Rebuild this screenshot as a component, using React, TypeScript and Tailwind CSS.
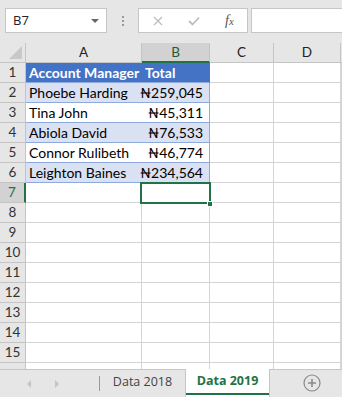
import React from 'react';

const ROWS: { name: string; total: string; band: boolean }[] = [
    { name: 'Phoebe Harding', total: '₦259,045', band: true },
    { name: 'Tina John', total: '₦45,311', band: false },
    { name: 'Abiola David', total: '₦76,533', band: true },
    { name: 'Connor Rulibeth', total: '₦46,774', band: false },
    { name: 'Leighton Baines', total: '₦234,564', band: true },
];

const cols = 'grid grid-cols-[26px_116px_68px_64px_67px_1fr]';
const cell = 'h-5 border-r border-b border-[#d4d4d4]';
const cellFont = { fontFamily: 'Lato, "Liberation Sans", sans-serif' };

const RowHead: React.FC<{ n: number; active?: boolean; hideLabel?: boolean }> = ({ n, active, hideLabel }) => (
    <div
        className={`h-5 flex items-center justify-center text-[13.5px] border-b border-[#c4c4c4] ${
            active ? 'bg-[#d2d2d2] text-[#217346] border-r-2 border-r-[#217346]' : 'bg-[#e6e6e6] text-[#333] border-r border-r-[#c4c4c4]'
        }`}
        style={cellFont}
    >
        {hideLabel ? '' : n}
    </div>
);

const Empties: React.FC = () => (
    <>
        <div className={cell} />
        <div className={cell} />
        <div className={cell} />
    </>
);

const FormulaBar: React.FC = () => (
    <div className="h-[43px] bg-[#e6e6e6] flex items-start pt-2 pl-[5px] gap-0" style={{ fontFamily: '"Open Sans", "Noto Sans", sans-serif' }}>
        <div className="w-[102px] h-[25px] bg-white border border-[#c6c6c6] flex items-center justify-between pl-[7px] pr-[7px] text-[13px] text-[#222]">
            <span>B7</span>
            <span className="w-0 h-0 border-l-[4px] border-r-[4px] border-t-[4px] border-l-transparent border-r-transparent border-t-[#666]" />
        </div>
        <div className="w-[31px] h-[25px] flex flex-col items-center justify-center gap-[2px]">
            <span className="w-[2px] h-[2px] bg-[#9a9a9a]" />
            <span className="w-[2px] h-[2px] bg-[#9a9a9a]" />
            <span className="w-[2px] h-[2px] bg-[#9a9a9a]" />
        </div>
        <div className="w-[110px] h-[25px] bg-white border border-[#c6c6c6] flex items-center">
            <svg className="ml-[14px]" width="10" height="10" viewBox="0 0 10 10">
                <path d="M1 1 L9 9 M9 1 L1 9" stroke="#bdbdbd" strokeWidth="1.3" />
            </svg>
            <svg className="ml-[25px]" width="12" height="10" viewBox="0 0 12 10">
                <path d="M1 5 L4.5 8.5 L11 1.5" stroke="#bdbdbd" strokeWidth="1.8" fill="none" />
            </svg>
            <span className="ml-[25px] text-[14px] italic text-[#555]" style={{ fontFamily: '"Liberation Serif", serif' }}>
                f<span className="text-[11px]">x</span>
            </span>
        </div>
        <div className="ml-[3px] flex-1 h-[25px] bg-white border border-[#c6c6c6] border-r-0" />
    </div>
);

const Grid: React.FC = () => (
    <div className="relative h-[326px] overflow-hidden bg-white">
        <div className={cols}>
            <div className="h-5 bg-[#e6e6e6] border-r border-b border-[#c4c4c4] relative">
                <span className="absolute right-[3px] bottom-[3px] w-0 h-0" style={{ borderBottom: '13px solid #c8c8c8', borderLeft: '13px solid transparent' }} />
            </div>
            {['A', 'B', 'C', 'D'].map(c => (
                <div
                    key={c}
                    className={`h-5 flex items-center justify-center text-[13.5px] border-r border-[#c4c4c4] ${
                        c === 'B' ? 'bg-[#d2d2d2] text-[#1e5c3a] border-b-2 border-b-[#217346]' : 'bg-[#e6e6e6] text-[#222] border-b border-b-[#c4c4c4]'
                    }`}
                    style={cellFont}
                >
                    {c}
                </div>
            ))}
            <div className="h-5 bg-[#e6e6e6] border-b border-[#c4c4c4]" />

            <RowHead n={1} />
            <div className="h-5 bg-[#4472c4] border-b border-[#8ea9db] text-white font-bold text-[14px] pl-[3px] flex items-center" style={cellFont}>Account Manager</div>
            <div className="h-5 bg-[#4472c4] border-b border-[#8ea9db] border-r border-r-[#4472c4] text-white font-bold text-[14px] pl-[3px] flex items-center" style={cellFont}>Total</div>
            <Empties />

            {ROWS.map((r, i) => (
                <React.Fragment key={r.name}>
                    <RowHead n={i + 2} />
                    <div className={`h-5 border-b border-[#8ea9db] text-[14px] text-black pl-[3px] flex items-center ${r.band ? 'bg-[#d9e1f2]' : 'bg-white'}`} style={cellFont}>{r.name}</div>
                    <div className={`h-5 border-b border-r border-[#8ea9db] text-[14px] text-black pr-[6px] flex items-center justify-end ${r.band ? 'bg-[#d9e1f2]' : 'bg-white'}`} style={cellFont}>{r.total}</div>
                    <Empties />
                </React.Fragment>
            ))}

            {Array.from({ length: 10 }, (_, i) => i + 7).map(n => (
                <React.Fragment key={n}>
                    <RowHead n={n} active={n === 7} hideLabel={n === 16} />
                    <div className={cell} />
                    <div className={cell} />
                    <Empties />
                </React.Fragment>
            ))}
        </div>
        {/* selection of B7 */}
        <div className="absolute left-[140px] top-[139px] w-[71px] h-[22px] border-2 border-[#217346]" />
        <div className="absolute left-[207px] top-[158px] w-[6px] h-[6px] bg-[#217346] border border-white" />
    </div>
);

const TabBar: React.FC = () => (
    <div className="h-[28px] bg-[#e6e6e6] border-t border-[#c6c6c6] flex items-stretch text-[12.5px]" style={{ fontFamily: '"Open Sans", "Noto Sans", sans-serif' }}>
        <div className="w-[100px] flex items-center border-r border-[#9a9a9a] my-[6px]">
            <span className="ml-[27px] w-0 h-0 border-t-[4px] border-b-[4px] border-r-[4px] border-t-transparent border-b-transparent border-r-[#c4c4c4]" />
            <span className="ml-[24px] w-0 h-0 border-t-[4px] border-b-[4px] border-l-[4px] border-t-transparent border-b-transparent border-l-[#c4c4c4]" />
        </div>
        <div className="w-[85px] flex items-center justify-center text-[#444] -mt-[2px]">Data 2018</div>
        <div className="w-[85px] bg-white border-x border-[#c6c6c6] -mt-px flex flex-col">
            <div className="flex-1 flex items-center justify-center font-bold text-[#217346]">Data 2019</div>
            <div className="h-[2px] mb-[2px] bg-[#217346]" />
        </div>
        <div className="flex-1 flex items-center justify-center pl-[11px] -mt-[2px]">
            <svg width="18" height="18" viewBox="0 0 18 18">
                <circle cx="9" cy="9" r="8" fill="none" stroke="#8a8a8a" strokeWidth="1.2" />
                <path d="M9 5 V13 M5 9 H13" stroke="#8a8a8a" strokeWidth="1.6" />
            </svg>
        </div>
    </div>
);

const App: React.FC = () => (
    <div className="w-[342px] h-[397px] overflow-hidden bg-[#e6e6e6] flex flex-col">
        <FormulaBar />
        <Grid />
        <TabBar />
    </div>
);

export default App;
